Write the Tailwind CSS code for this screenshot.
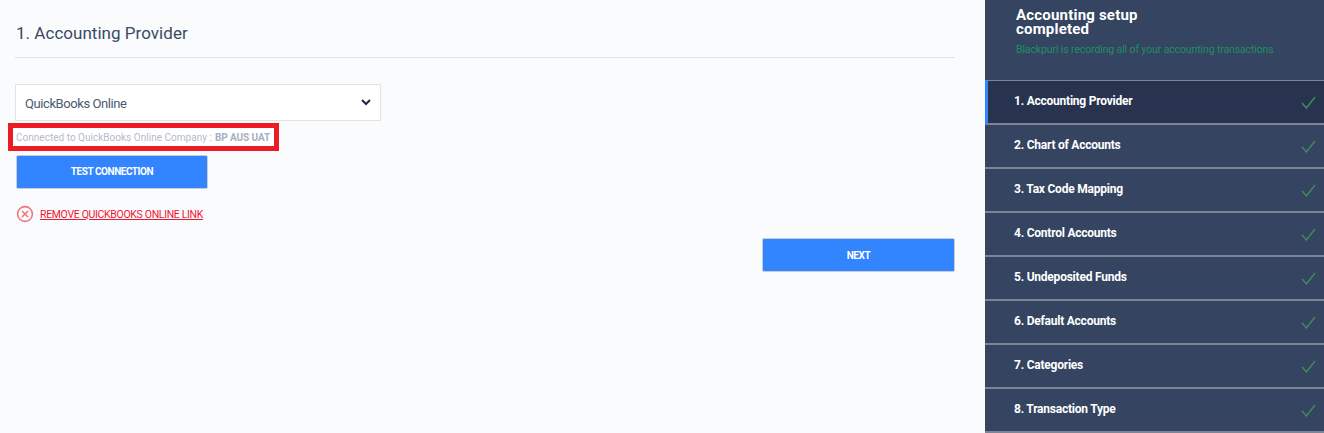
<!DOCTYPE html>
<html lang="en">
<head>
  <meta charset="UTF-8">
  <title>Accounting Provider</title>
  <script src="https://cdn.jsdelivr.net/npm/@tailwindcss/browser@4"></script>
</head>
<body class="bg-[#fafbfd] h-[433px] overflow-hidden font-['Roboto',sans-serif]">
  <div class="flex h-[433px]">

    <!-- Main -->
    <div class="w-[985px] shrink-0 pl-4 pr-[30px]">
      <h1 class="h-[58px] pt-[22px] pl-px text-[17px] leading-[22px] tracking-[0.03px] text-[#3a4a64] border-b border-[#dfe1e6] -ml-px">1. Accounting Provider</h1>

      <div class="mt-[26px] -ml-px w-[366px] h-[37px] bg-white border border-[#e0e2e6] pl-[9px] pr-[9px] flex items-center justify-between">
        <span class="pt-[2px] text-[13px] tracking-[-0.42px] text-[#4a5a70]">QuickBooks Online</span>
        <svg width="10" height="7" viewBox="0 0 10 7" fill="none" stroke="#1c2b4a" stroke-width="2"><path d="M1 1l4 4 4-4"/></svg>
      </div>

      <div class="-ml-2 mt-[2px] w-[271px] h-[28px] border-[5px] border-[#ed1c24] bg-white flex items-center pl-[3px] whitespace-nowrap text-[10px] tracking-[0.02px] text-[#b5bbc9]">
        <span>Connected to QuickBooks Online Company :</span>
        <span class="ml-[3px] font-bold tracking-[-0.08px] text-[#a7afc2]">BP AUS UAT</span>
      </div>

      <button class="block mt-[4px] w-[192px] h-[34px] pb-[2px] bg-[#3385ff] border border-[#c9ced6] rounded-[2px] text-white text-[10px] tracking-[-0.45px] font-bold">TEST CONNECTION</button>

      <div class="mt-[16px] flex items-center">
        <svg width="18" height="18" viewBox="0 0 18 18" fill="none" stroke="#f4747c" stroke-width="1.6">
          <circle cx="9" cy="9" r="7.4"/>
          <path d="M6 6l6 6M12 6l-6 6"/>
        </svg>
        <a href="#" class="ml-[6px] pt-px text-[10.5px] tracking-[-0.33px] text-[#f0142f] underline">REMOVE QUICKBOOKS ONLINE LINK</a>
      </div>

      <div class="flex justify-end mt-[15px]">
        <button class="w-[193px] h-[34px] bg-[#3385ff] border border-[#c9ced6] rounded-[2px] text-white text-[10px] tracking-[-0.4px] font-bold">NEXT</button>
      </div>
    </div>

    <!-- Sidebar -->
    <div class="w-[339px] shrink-0 bg-[#344461]">
      <div class="h-[80px] pl-[31px] pt-[8px]">
        <div class="text-[15px] leading-[14px] tracking-[0.2px] font-bold text-white w-[150px]">Accounting setup completed</div>
        <div class="mt-[7px] text-[10.5px] leading-[14px] tracking-[-0.12px] text-[#1f8f62]">Blackpurl is recording all of your accounting transactions</div>
      </div>

      <div class="h-[45px] pb-[2px] border-t border-b-2 border-t-[#7d8492] border-b-[#7d8492] bg-[#28344f] border-l-[3px] border-l-[#3385ff] pl-[26px] pr-[8px] flex items-center justify-between">
        <span class="text-[12px] tracking-[-0.23px] font-bold text-white">1. Accounting Provider</span>
        <svg class="mt-[3px]" width="15" height="13" viewBox="0 0 15 13" fill="none" stroke="#3f8a58" stroke-width="1.5"><path d="M1 7l4.5 5L14 1"/></svg>
      </div>
      <div class="h-[44px] pb-[2px] border-b-2 border-[#7d8492] pl-[29px] pr-[8px] flex items-center justify-between">
        <span class="text-[12px] tracking-[-0.23px] font-bold text-white">2. Chart of Accounts</span>
        <svg class="mt-[3px]" width="15" height="13" viewBox="0 0 15 13" fill="none" stroke="#3f8a58" stroke-width="1.5"><path d="M1 7l4.5 5L14 1"/></svg>
      </div>
      <div class="h-[44px] pb-[2px] border-b-2 border-[#7d8492] pl-[29px] pr-[8px] flex items-center justify-between">
        <span class="text-[12px] tracking-[-0.23px] font-bold text-white">3. Tax Code Mapping</span>
        <svg class="mt-[3px]" width="15" height="13" viewBox="0 0 15 13" fill="none" stroke="#3f8a58" stroke-width="1.5"><path d="M1 7l4.5 5L14 1"/></svg>
      </div>
      <div class="h-[44px] pb-[2px] border-b-2 border-[#7d8492] pl-[29px] pr-[8px] flex items-center justify-between">
        <span class="text-[12px] tracking-[-0.23px] font-bold text-white">4. Control Accounts</span>
        <svg class="mt-[3px]" width="15" height="13" viewBox="0 0 15 13" fill="none" stroke="#3f8a58" stroke-width="1.5"><path d="M1 7l4.5 5L14 1"/></svg>
      </div>
      <div class="h-[44px] pb-[2px] border-b-2 border-[#7d8492] pl-[29px] pr-[8px] flex items-center justify-between">
        <span class="text-[12px] tracking-[-0.23px] font-bold text-white">5. Undeposited Funds</span>
        <svg class="mt-[3px]" width="15" height="13" viewBox="0 0 15 13" fill="none" stroke="#3f8a58" stroke-width="1.5"><path d="M1 7l4.5 5L14 1"/></svg>
      </div>
      <div class="h-[44px] pb-[2px] border-b-2 border-[#7d8492] pl-[29px] pr-[8px] flex items-center justify-between">
        <span class="text-[12px] tracking-[-0.23px] font-bold text-white">6. Default Accounts</span>
        <svg class="mt-[3px]" width="15" height="13" viewBox="0 0 15 13" fill="none" stroke="#3f8a58" stroke-width="1.5"><path d="M1 7l4.5 5L14 1"/></svg>
      </div>
      <div class="h-[44px] pb-[2px] border-b-2 border-[#7d8492] pl-[29px] pr-[8px] flex items-center justify-between">
        <span class="text-[12px] tracking-[-0.23px] font-bold text-white">7. Categories</span>
        <svg class="mt-[3px]" width="15" height="13" viewBox="0 0 15 13" fill="none" stroke="#3f8a58" stroke-width="1.5"><path d="M1 7l4.5 5L14 1"/></svg>
      </div>
      <div class="h-[44px] pb-[2px] border-b-2 border-[#7d8492] pl-[29px] pr-[8px] flex items-center justify-between">
        <span class="text-[12px] tracking-[-0.23px] font-bold text-white">8. Transaction Type</span>
        <svg class="mt-[3px]" width="15" height="13" viewBox="0 0 15 13" fill="none" stroke="#3f8a58" stroke-width="1.5"><path d="M1 7l4.5 5L14 1"/></svg>
      </div>
    </div>
  </div>
</body>
</html>
